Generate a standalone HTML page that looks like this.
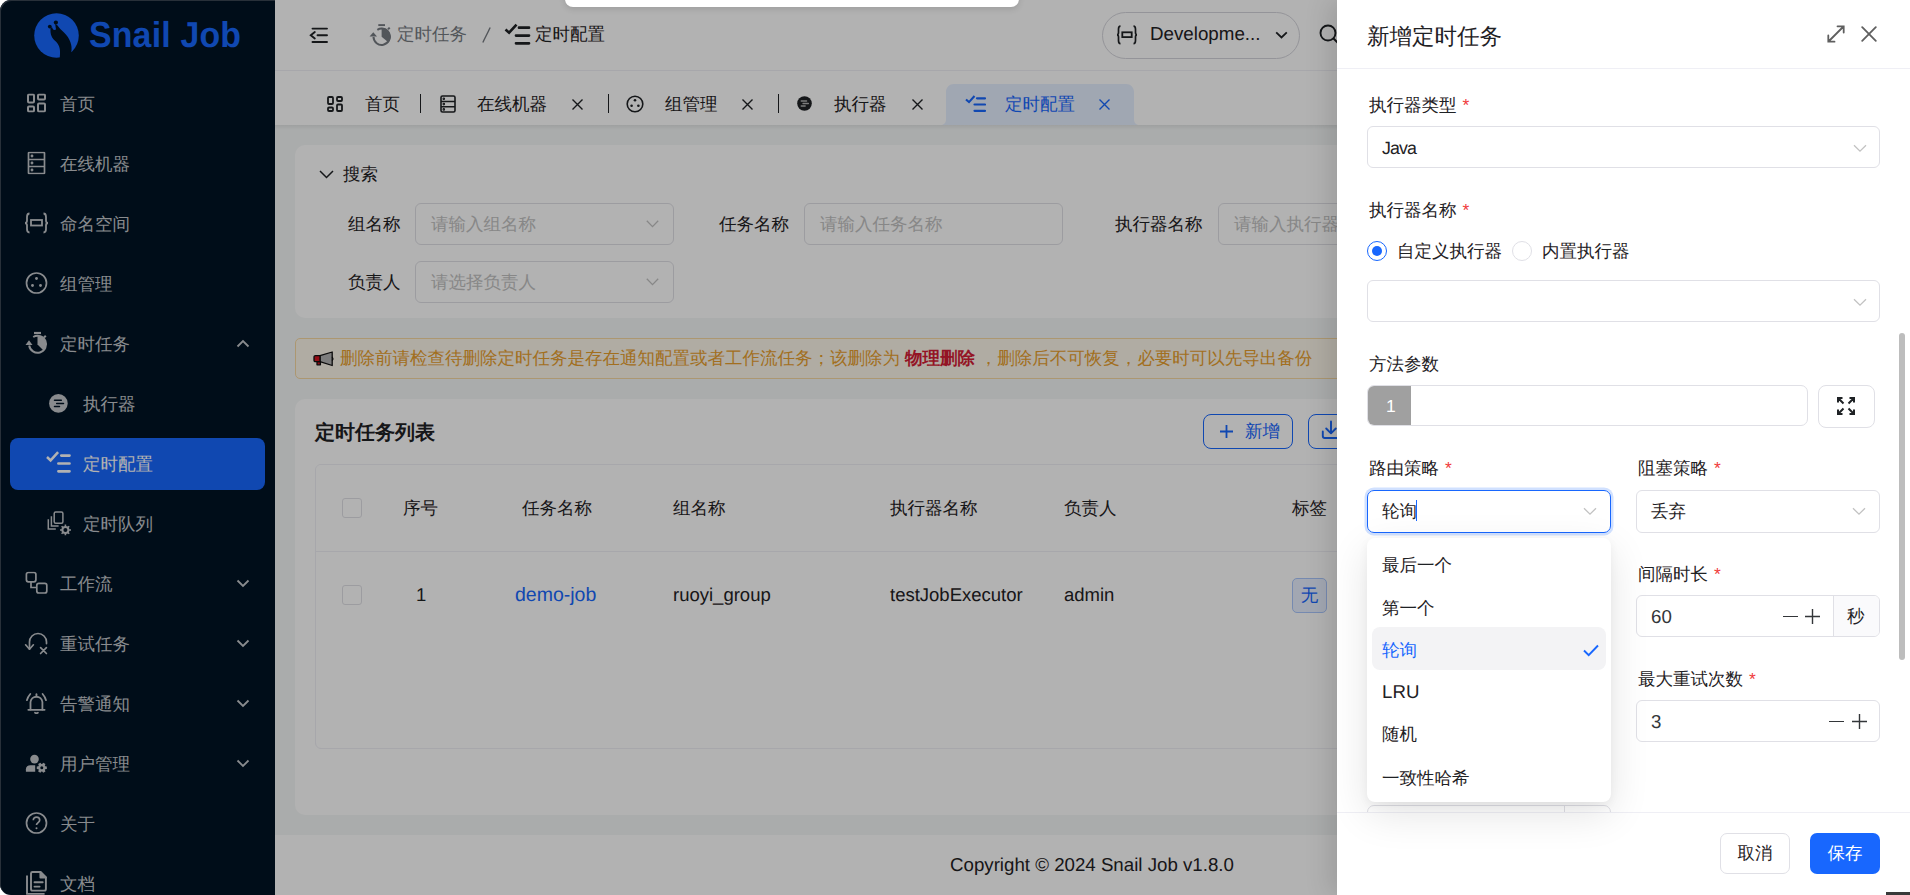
<!DOCTYPE html>
<html><head><meta charset="utf-8">
<style>
*{box-sizing:border-box;margin:0;padding:0}
html,body{width:1910px;height:895px;overflow:hidden;background:#fff}
body{position:relative;font-family:"Liberation Sans",sans-serif;font-size:17.5px;color:#1f2225;text-rendering:geometricPrecision}
.abs{position:absolute}
svg{display:block}
/* sidebar */
#side{position:absolute;left:0;top:0;width:275px;height:895px;background:#011324;border-radius:11px 0 0 11px;box-shadow:inset 1px 1px 0 #3a4652}
.mi{position:absolute;left:0;width:275px;height:52px;color:#c4c8cc;font-size:17.5px;line-height:52px}
.mi .ic{position:absolute;top:50%;transform:translateY(-50%)}
.mi .tx{position:absolute;left:60px;top:1px}
.mi .chev{position:absolute;left:236px;top:50%;margin-top:-4px}
/* header */
#hdr{position:absolute;left:275px;top:0;width:1635px;height:71px;background:#fff;border-bottom:1px solid #efeff5}
#tabs{position:absolute;left:275px;top:70px;width:1635px;height:55px;background:#fff}
#content{position:absolute;left:275px;top:125px;width:1635px;height:710px;background:#f4f7f7}
#foot{position:absolute;left:275px;top:835px;width:1635px;height:60px;background:#fff}
.card{position:absolute;background:#fff;border-radius:10px}
.inp{position:absolute;border:1px solid #e0e0e6;border-radius:6px;height:42px;background:#fff}
.ph{position:absolute;left:15px;top:0;line-height:40px;color:#c2c2c2}
.lbl{position:absolute;line-height:20px}
#overlay{position:absolute;left:0;top:0;width:1910px;height:895px;background:rgba(0,0,0,.3);border-radius:11px 0 0 11px}
/* drawer */
#drawer{position:absolute;left:1337px;top:0;width:573px;height:895px;background:#fff;box-shadow:-8px 0 24px rgba(0,0,0,.12)}
.dl{position:absolute;line-height:20px;color:#1f2225}
.req{color:#f03d3d;margin-left:6px}
.sel{position:absolute;height:42px;border:1px solid #e0e0e6;border-radius:6px;background:#fff}
</style></head><body>

<div id="side">
 <svg class="abs" style="left:30px;top:10px" width="54" height="52" viewBox="0 0 54 52">
  <circle cx="26.5" cy="25.5" r="22.3" fill="#1867fe"/>
  <path d="M20.6,17.5 C20.2,22 20.5,27 25,30.8 C29,34 30.4,38.5 30,44 L29.5,52 L46,52 L41.3,42.6 C42.6,35 40,28.5 34,22.5 C31.5,20 29.5,18.5 27.6,15.5 L25.2,14.2 L26,19.6 C24.6,20.5 22.8,20.2 22.2,17.6 Z" fill="#011324"/>
  <circle cx="19.8" cy="16.6" r="1.9" fill="#011324"/>
  <circle cx="25.9" cy="12.6" r="2.1" fill="#011324"/>
 </svg>
 <div class="abs" style="left:89px;top:13px;font-size:36px;font-weight:bold;color:#1867fe;line-height:44px;transform-origin:0 0;transform:scaleX(0.94);letter-spacing:0.2px">Snail Job</div>

 <div class="mi" style="top:77px">
  <svg class="ic" style="left:27px" width="19" height="19" viewBox="0 0 19 19" fill="none" stroke="#c4c8cc" stroke-width="2"><rect x="1" y="1" width="6" height="8" rx="1"/><rect x="11" y="1" width="7" height="5" rx="1"/><rect x="1" y="13" width="6" height="5" rx="1"/><rect x="11" y="10" width="7" height="8" rx="1"/></svg>
  <span class="tx">首页</span></div>
 <div class="mi" style="top:137px">
  <svg class="ic" style="left:27px" width="19" height="23" viewBox="0 0 19 23" fill="none" stroke="#c4c8cc" stroke-width="1.7"><rect x="1.5" y="1" width="16" height="21" rx="0.5"/><path d="M1.5 8h16M1.5 15h16"/><circle cx="5" cy="4.5" r="0.6" fill="#c4c8cc"/><circle cx="5" cy="11.5" r="0.6" fill="#c4c8cc"/><circle cx="5" cy="18.5" r="0.6" fill="#c4c8cc"/></svg>
  <span class="tx">在线机器</span></div>
 <div class="mi" style="top:197px">
  <svg class="ic" style="left:24px" width="25" height="22" viewBox="0 0 25 22" fill="none" stroke="#c4c8cc" stroke-width="1.8"><path d="M5.5 1.5C3 1.5 3 3 3 5v3.5C3 10 2 11 1 11c1 0 2 1 2 2.5V17c0 2 0 3.5 2.5 3.5"/><path d="M19.5 1.5C22 1.5 22 3 22 5v3.5c0 1.5 1 2.5 2 2.5c-1 0-2 1-2 2.5V17c0 2 0 3.5-2.5 3.5"/><rect x="7" y="8" width="11" height="5.5"/></svg>
  <span class="tx">命名空间</span></div>
 <div class="mi" style="top:257px">
  <svg class="ic" style="left:25px" width="23" height="23" viewBox="0 0 23 23" fill="none" stroke="#c4c8cc" stroke-width="1.7"><circle cx="11.5" cy="11.5" r="10"/><circle cx="11.5" cy="7" r="1.4" fill="#c4c8cc" stroke="none"/><circle cx="7.5" cy="14" r="1.4" fill="#c4c8cc" stroke="none"/><circle cx="15.5" cy="14" r="1.4" fill="#c4c8cc" stroke="none"/></svg>
  <span class="tx">组管理</span></div>
 <div class="mi" style="top:317px">
  <svg class="ic" style="left:22px" width="30" height="30" viewBox="0 0 30 30" fill="none" stroke="#c4c8cc" stroke-width="2"><path d="M12 5h7" stroke-width="2.2"/><path d="M7.2 17.5A8.5 8.5 0 1 0 11.2 9"/><path d="M15.5 16.5V8A8.5 8.5 0 0 1 21.5 22.5Z" fill="#c4c8cc" stroke="none"/><path d="M3.5 17L7 12.3L10.5 17Z" fill="#c4c8cc" stroke="none"/><path d="M22 9.5l1.8-1.8"/></svg>
  <span class="tx">定时任务</span>
  <svg class="chev" width="14" height="9" viewBox="0 0 14 9" fill="none" stroke="#c4c8cc" stroke-width="1.8"><path d="M1.5 7.5L7 2l5.5 5.5"/></svg></div>
 <div class="mi" style="top:377px">
  <svg class="abs" style="left:49px;top:17px" width="19" height="19" viewBox="0 0 19 19"><circle cx="9.4" cy="9.4" r="9.3" fill="#c4c8cc"/><path d="M5.5 6.3h6.8M7.7 9.4h6.8M5.5 12.6h5" stroke="#011324" stroke-width="1.5" stroke-linecap="round"/></svg>
  <span class="tx" style="left:83px">执行器</span></div>
 <div class="abs" style="left:10px;top:438px;width:255px;height:52px;background:#1867fe;border-radius:8px"></div>
 <div class="mi" style="top:437px;color:#fff">
  <svg class="ic" style="left:46px" width="26" height="26" viewBox="0 0 26 26" fill="none" stroke="#fff" stroke-width="2.7"><path d="M1 7l3.6 3.4L12.1 2.2" stroke-width="2.5"/><path d="M15.3 5.6h8.2M12.4 13.5h11.1M12.4 21.3h11.1" stroke-linecap="round"/></svg>
  <span class="tx" style="left:83px">定时配置</span></div>
 <div class="mi" style="top:497px">
  <svg class="ic" style="left:46px" width="26" height="25" viewBox="0 0 26 25" fill="none" stroke="#c4c8cc" stroke-width="1.5"><rect x="8.2" y="1.6" width="8.7" height="11.1" rx="1.5"/><path d="M5.4 5.8v9.6h7.2M2.3 8.8v9.8h7.5"/><circle cx="19.4" cy="19.5" r="3" stroke-width="2"/><path d="M19.4 14v2M19.4 23v2M14 19.5h2M23 19.5h2M15.6 15.7l1.4 1.4M21.8 21.9l1.4 1.4M15.6 23.3l1.4-1.4M21.8 17.1l1.4-1.4" stroke-width="1.6"/></svg>
  <span class="tx" style="left:83px">定时队列</span></div>
 <div class="mi" style="top:557px">
  <svg class="ic" style="left:25px" width="23" height="23" viewBox="0 0 23 23" fill="none" stroke="#c4c8cc" stroke-width="1.7"><rect x="1.4" y="1" width="9.5" height="9.3" rx="2"/><rect x="11.8" y="11.9" width="10" height="9.6" rx="2"/><path d="M6 10.3v5.7h5.8"/></svg>
  <span class="tx">工作流</span>
  <svg class="chev" width="14" height="9" viewBox="0 0 14 9" fill="none" stroke="#c4c8cc" stroke-width="1.8"><path d="M1.5 1.5L7 7l5.5-5.5"/></svg></div>
 <div class="mi" style="top:617px">
  <svg class="abs" style="left:20px;top:11px" width="32" height="32" viewBox="0 0 32 32" fill="none" stroke="#c4c8cc" stroke-width="1.7" stroke-linecap="round" stroke-linejoin="round"><path d="M9.5 21V14A8.5 8.5 0 0 1 26.5 14V15.6"/><path d="M5.6 16.8L9.5 21.2L13.4 16.8"/><path d="M20.6 19.7L26.4 25.5M26.4 19.7L20.6 25.5"/></svg>
  <span class="tx">重试任务</span>
  <svg class="chev" width="14" height="9" viewBox="0 0 14 9" fill="none" stroke="#c4c8cc" stroke-width="1.8"><path d="M1.5 1.5L7 7l5.5-5.5"/></svg></div>
 <div class="mi" style="top:677px">
  <svg class="abs" style="left:20px;top:11px" width="32" height="32" viewBox="0 0 32 32" fill="none" stroke="#c4c8cc" stroke-width="1.8" stroke-linecap="round"><path d="M10.5 21.6V14A6 6 0 0 1 22.4 14V21.6"/><path d="M8.3 21.8H24.6"/><path d="M16.45 8V6.2"/><path d="M15 24.8Q16.45 25.6 17.9 24.8"/><path d="M10.3 6Q8 8.6 6.9 12.2M22.6 6Q24.9 8.6 26 12.2"/></svg>
  <span class="tx">告警通知</span>
  <svg class="chev" width="14" height="9" viewBox="0 0 14 9" fill="none" stroke="#c4c8cc" stroke-width="1.8"><path d="M1.5 1.5L7 7l5.5-5.5"/></svg></div>
 <div class="mi" style="top:737px">
  <svg class="abs" style="left:20px;top:11px" width="32" height="32" viewBox="0 0 32 32"><circle cx="14.5" cy="11.1" r="4.3" fill="#c4c8cc"/><path d="M5.9 23.8V21.2C5.9 18.7 7.8 17.2 10.4 17.2H15.2V23.8Z" fill="#c4c8cc"/><path fill-rule="evenodd" fill="#c4c8cc" d="M25.18,18.19 L26.84,18.40 L26.84,21.00 L25.18,21.21 L24.80,21.87 L25.44,23.41 L23.20,24.71 L22.18,23.38 L21.42,23.38 L20.40,24.71 L18.16,23.41 L18.80,21.87 L18.42,21.21 L16.76,21.00 L16.76,18.40 L18.42,18.19 L18.80,17.53 L18.16,15.99 L20.40,14.69 L21.42,16.02 L22.18,16.02 L23.20,14.69 L25.44,15.99 L24.80,17.53Z M23.3,19.7 A1.5,1.5 0 1 0 20.3,19.7 A1.5,1.5 0 1 0 23.3,19.7Z"/></svg>
  <span class="tx">用户管理</span>
  <svg class="chev" width="14" height="9" viewBox="0 0 14 9" fill="none" stroke="#c4c8cc" stroke-width="1.8"><path d="M1.5 1.5L7 7l5.5-5.5"/></svg></div>
 <div class="mi" style="top:797px">
  <svg class="ic" style="left:25px" width="23" height="23" viewBox="0 0 23 23" fill="none" stroke="#c4c8cc" stroke-width="1.7"><circle cx="11.5" cy="11.5" r="10"/><path d="M8.3 8.8C8.3 6.8 9.8 5.6 11.5 5.6s3.2 1.2 3.2 3c0 2.5-3.2 2.5-3.2 5"/><circle cx="11.5" cy="16.8" r="1" fill="#c4c8cc" stroke="none"/></svg>
  <span class="tx">关于</span></div>
 <div class="mi" style="top:857px">
  <svg class="abs" style="left:20px;top:9px" width="32" height="32" viewBox="0 0 32 32" fill="none" stroke="#c4c8cc" stroke-width="1.9" stroke-linejoin="round"><path d="M12.5 6H20.4L25.9 11.5V23Q25.9 24.6 24.3 24.6H12.5Q11 24.6 11 23V7.5Q11 6 12.5 6Z"/><path d="M20.4 6V11.5H25.9Z" fill="#c4c8cc"/><path d="M14.5 16.2H22.7M14.5 20.6H19.6" stroke-linecap="round"/><path d="M7 9.4V27.9H24.6"/></svg>
  <span class="tx">文档</span></div>
</div>
<div id="tabs">
 <svg class="abs" style="left:52px;top:26px" width="16" height="16" viewBox="0 0 16 16" fill="none" stroke="#1f2225" stroke-width="1.8"><rect x="1" y="1" width="5" height="7" rx="1"/><rect x="10" y="1" width="5" height="4" rx="1"/><rect x="1" y="11.5" width="5" height="3.5" rx="1"/><rect x="10" y="8.5" width="5" height="6.5" rx="1"/></svg>
 <div class="abs" style="left:90px;top:24px;line-height:20px">首页</div>
 <div class="abs" style="left:145px;top:24px;width:1px;height:19px;background:#1f2225"></div>
 <svg class="abs" style="left:165px;top:25px" width="16" height="18" viewBox="0 0 16 18" fill="none" stroke="#1f2225" stroke-width="1.6"><rect x="1" y="1" width="14" height="16" rx="1.5"/><path d="M1 6.5h14M1 11.8h14"/><circle cx="3.8" cy="3.8" r=".5" fill="#1f2225"/><circle cx="3.8" cy="9.1" r=".5" fill="#1f2225"/><circle cx="3.8" cy="14.4" r=".5" fill="#1f2225"/></svg>
 <div class="abs" style="left:202px;top:24px;line-height:20px">在线机器</div>
 <svg class="abs" style="left:297px;top:29px" width="11" height="11" viewBox="0 0 11 11" fill="none" stroke="#1f2225" stroke-width="1.4"><path d="M.5.5l10 10M10.5.5l-10 10"/></svg>
 <div class="abs" style="left:333px;top:24px;width:1px;height:19px;background:#1f2225"></div>
 <svg class="abs" style="left:351px;top:25px" width="18" height="18" viewBox="0 0 18 18" fill="none" stroke="#1f2225" stroke-width="1.6"><circle cx="9" cy="9" r="7.8"/><circle cx="9" cy="5.3" r="1.3" fill="#1f2225" stroke="none"/><circle cx="5.6" cy="10.8" r="1.3" fill="#1f2225" stroke="none"/><circle cx="12.4" cy="10.8" r="1.3" fill="#1f2225" stroke="none"/></svg>
 <div class="abs" style="left:390px;top:24px;line-height:20px">组管理</div>
 <svg class="abs" style="left:467px;top:29px" width="11" height="11" viewBox="0 0 11 11" fill="none" stroke="#1f2225" stroke-width="1.4"><path d="M.5.5l10 10M10.5.5l-10 10"/></svg>
 <div class="abs" style="left:503px;top:24px;width:1px;height:19px;background:#1f2225"></div>
 <svg class="abs" style="left:522px;top:26px" width="15" height="15" viewBox="0 0 15 15"><circle cx="7.5" cy="7.5" r="7.3" fill="#1f2225"/><path d="M4.2 5h5.4M6 7.5h5.4M4.2 10h4" stroke="#b3b3b3" stroke-width="1.3" stroke-linecap="round"/></svg>
 <div class="abs" style="left:559px;top:24px;line-height:20px">执行器</div>
 <svg class="abs" style="left:637px;top:29px" width="11" height="11" viewBox="0 0 11 11" fill="none" stroke="#1f2225" stroke-width="1.4"><path d="M.5.5l10 10M10.5.5l-10 10"/></svg>
 <svg class="abs" style="left:665px;top:14px" width="200" height="41" viewBox="0 0 200 41"><path d="M0 41C4 41 6 39 6 35V8C6 3.5 9.5 0 14 0H186C190.5 0 194 3.5 194 8V35C194 39 196 41 200 41Z" fill="#e6efff"/></svg>
 <svg class="abs" style="left:690px;top:24px" width="21" height="19" viewBox="0 0 21 19" fill="none" stroke="#1867fe" stroke-width="2.2"><path d="M1 5.5l3 2.6L9.5 2" stroke-width="2.1"/><path d="M12 4.3h8M9.5 10.5h10.5M9.5 16.8h10.5" stroke-linecap="round"/></svg>
 <div class="abs" style="left:730px;top:24px;line-height:20px;color:#1867fe">定时配置</div>
 <svg class="abs" style="left:824px;top:29px" width="11" height="11" viewBox="0 0 11 11" fill="none" stroke="#1867fe" stroke-width="1.4"><path d="M.5.5l10 10M10.5.5l-10 10"/></svg>
</div>
<div id="hdr">
 <svg class="abs" style="left:34px;top:26px" width="20" height="18" viewBox="0 0 20 18" fill="none" stroke="#1f2225" stroke-width="1.9" stroke-linecap="round"><path d="M3.5 2.6h14.5M8.5 9.2h9.5M3.5 16h14.5M5.8 6l-4 3.2 4 3.2"/></svg>
 <svg class="abs" style="left:94px;top:23px" width="24" height="24" viewBox="0 0 24 24" fill="none" stroke="#767b82" stroke-width="2"><path d="M9.3 2.1h6.7" stroke-width="1.9"/><path d="M4.50 14.05A8.15 8.15 0 1 0 8.33 6.84"/><path d="M12.65 13.75V4.70A9.05 9.05 0 0 1 19.58 19.57Z" fill="#767b82" stroke="none"/><path d="M0.6 13.6L4.3 9.3L8 13.6Z" fill="#767b82" stroke="none"/><path d="M19 6.3l1.7-1.7"/></svg>
 <div class="abs" style="left:122px;top:24px;line-height:20px;color:#767b82">定时任务</div>
 <svg class="abs" style="left:207px;top:27px" width="9" height="16" viewBox="0 0 9 16"><path d="M0.8 15.5L8.2 0.5" stroke="#767b82" stroke-width="1.4"/></svg>
 <svg class="abs" style="left:229px;top:22px" width="27" height="24" viewBox="0 0 27 24" fill="none" stroke="#1f2225" stroke-width="2.7"><path d="M1.5 7.5l3.6 3.2L12.5 2.6" stroke-width="2.6"/><path d="M15 5.7h10M12 13.6h13M12 21.3h13" stroke-linecap="round"/></svg>
 <div class="abs" style="left:260px;top:24px;line-height:20px;color:#1f2225">定时配置</div>
 <div class="abs" style="left:827px;top:12px;width:198px;height:47px;border:1px solid #d5d5dc;border-radius:24px"></div>
 <svg class="abs" style="left:841px;top:25px" width="22" height="20" viewBox="0 0 22 20" fill="none" stroke="#1f2225" stroke-width="1.7"><path d="M4.5 1.2C2.5 1.2 2.5 2.5 2.5 4.3v3.3C2.5 9 1.8 9.8 1 9.8c.8 0 1.5.8 1.5 2.2v3.5c0 1.8 0 3.2 2 3.2"/><path d="M17.5 1.2c2 0 2 1.3 2 3.1v3.3c0 1.4.7 2.2 1.5 2.2-.8 0-1.5.8-1.5 2.2v3.5c0 1.8 0 3.2-2 3.2"/><rect x="6.3" y="7.3" width="9.4" height="4.8" stroke-width="1.8"/></svg>
 <div class="abs" style="left:875px;top:23px;line-height:22px;font-size:18.75px;color:#1f2225">Developme...</div>
 <svg class="abs" style="left:1000px;top:31px" width="13" height="8" viewBox="0 0 13 8" fill="none" stroke="#1f2225" stroke-width="1.8"><path d="M1.2 1.3L6.5 6.5l5.3-5.2"/></svg>
 <svg class="abs" style="left:1044px;top:24px" width="22" height="22" viewBox="0 0 22 22" fill="none" stroke="#1f2225" stroke-width="1.9"><circle cx="9" cy="9" r="7.5"/><path d="M14.5 14.5l5.5 5.5"/></svg>
</div>
<div id="content">
 <div class="abs" style="left:0;top:0;width:1635px;height:5px;background:linear-gradient(rgba(0,0,0,.07),rgba(0,0,0,0))"></div>
 <div class="card" style="left:20px;top:20px;width:1300px;height:173px">
  <svg class="abs" style="left:24px;top:25px" width="15" height="9" viewBox="0 0 15 9" fill="none" stroke="#1f2225" stroke-width="1.5"><path d="M1 1l6.5 6.5L14 1"/></svg>
  <div class="abs" style="left:48px;top:19px;line-height:20px">搜索</div>
  <div class="abs" style="left:53px;top:69px;line-height:20px">组名称</div>
  <div class="inp" style="left:120px;top:58px;width:259px"><div class="ph">请输入组名称</div>
   <svg class="abs" style="left:230px;top:16px" width="13" height="8" viewBox="0 0 13 8" fill="none" stroke="#c2c2c2" stroke-width="1.3"><path d="M.8.8l5.7 5.8L12.2.8"/></svg></div>
  <div class="abs" style="left:424px;top:69px;line-height:20px">任务名称</div>
  <div class="inp" style="left:509px;top:58px;width:259px"><div class="ph">请输入任务名称</div></div>
  <div class="abs" style="left:820px;top:69px;line-height:20px">执行器名称</div>
  <div class="inp" style="left:923px;top:58px;width:259px"><div class="ph">请输入执行器名称</div></div>
  <div class="abs" style="left:53px;top:127px;line-height:20px">负责人</div>
  <div class="inp" style="left:120px;top:116px;width:259px"><div class="ph">请选择负责人</div>
   <svg class="abs" style="left:230px;top:16px" width="13" height="8" viewBox="0 0 13 8" fill="none" stroke="#c2c2c2" stroke-width="1.3"><path d="M.8.8l5.7 5.8L12.2.8"/></svg></div>
 </div>
 <div class="abs" style="left:20px;top:213px;width:1300px;height:41px;background:#fdf6ea;border:1px solid #f6d9a2;border-radius:5px">
  <svg class="abs" style="left:17px;top:12px" width="22" height="16" viewBox="0 0 22 16" stroke="#111" stroke-width="1.3" stroke-linejoin="round"><path d="M7 4.7L19.2 1V14.5L7 10.7Z" fill="#b4b4b4"/><path d="M19.2 5.8Q20.6 7.7 19.2 9.6" fill="none"/><path d="M4 10.5H7.4V13.8H4Z" fill="#d3131f"/><path d="M2.5 4.7H7V10.7H2.5Q1 10.7 1 9.2V6.2Q1 4.7 2.5 4.7Z" fill="#d3131f"/></svg>
  <div class="abs" style="left:44px;top:9px;line-height:20px;color:#e8a02e;white-space:nowrap">删除前请检查待删除定时任务是存在通知配置或者工作流任务；该删除为 <b style="color:#d41e36">物理删除</b> ，删除后不可恢复，必要时可以先导出备份</div>
 </div>
 <div class="card" style="left:20px;top:274px;width:1300px;height:416px">
  <div class="abs" style="left:20px;top:22px;line-height:24px;font-size:20px;font-weight:bold;color:#1f2225">定时任务列表</div>
  <div class="abs" style="left:908px;top:15px;width:90px;height:35px;border:1.3px solid #1867fe;border-radius:8px"></div>
  <svg class="abs" style="left:925px;top:26px" width="13" height="13" viewBox="0 0 13 13" stroke="#1867fe" stroke-width="1.8"><path d="M6.5 0v13M0 6.5h13"/></svg>
  <div class="abs" style="left:950px;top:22px;line-height:20px;color:#1867fe">新增</div>
  <div class="abs" style="left:1013px;top:15px;width:90px;height:35px;border:1.3px solid #1867fe;border-radius:8px"></div>
  <svg class="abs" style="left:1026px;top:21px" width="20" height="20" viewBox="0 0 20 20" fill="none" stroke="#1867fe" stroke-width="1.9" stroke-linecap="round" stroke-linejoin="round"><path d="M10 1.5v11.5M5.2 8.5l4.8 4.8 4.8-4.8M1.8 11.5v4.5q0 2 2 2h12.4q2 0 2-2v-4.5"/></svg>
  <div class="abs" style="left:20px;top:65px;width:1300px;height:285px;border:1px solid #efeff5;border-radius:6px;overflow:hidden">
   <div class="abs" style="left:0;top:0;width:1300px;height:87px;background:#fff;border-bottom:1px solid #efeff5"></div>
   <div class="abs" style="left:26px;top:33px;width:20px;height:20px;border:1px solid #e0e0e6;border-radius:3px;background:#fff"></div>
   <div class="abs" style="left:87px;top:33px;line-height:20px">序号</div>
   <div class="abs" style="left:206px;top:33px;line-height:20px">任务名称</div>
   <div class="abs" style="left:357px;top:33px;line-height:20px">组名称</div>
   <div class="abs" style="left:574px;top:33px;line-height:20px">执行器名称</div>
   <div class="abs" style="left:748px;top:33px;line-height:20px">负责人</div>
   <div class="abs" style="left:976px;top:33px;line-height:20px">标签</div>
   <div class="abs" style="left:26px;top:120px;width:20px;height:20px;border:1px solid #e0e0e6;border-radius:3px;background:#fff"></div>
   <div class="abs" style="left:100px;top:119px;line-height:22px;font-size:18.5px">1</div>
   <div class="abs" style="left:199px;top:119px;line-height:22px;font-size:19.5px;color:#1867fe">demo-job</div>
   <div class="abs" style="left:357px;top:119px;line-height:22px;font-size:18.5px">ruoyi_group</div>
   <div class="abs" style="left:574px;top:119px;line-height:22px;font-size:18.5px">testJobExecutor</div>
   <div class="abs" style="left:748px;top:119px;line-height:22px;font-size:18.5px">admin</div>
   <div class="abs" style="left:976px;top:113px;width:35px;height:35px;border:1px solid #a9c6fd;background:#e8f0ff;border-radius:5px;color:#1867fe;line-height:33px;text-align:center">无</div>
  </div>
 </div>
</div>
<div id="foot">
 <div class="abs" style="left:675px;top:19px;line-height:22px;font-size:18.7px;color:#1f2225">Copyright © 2024 Snail Job v1.8.0</div>
</div>

<div id="overlay"></div>
<div id="drawer">
 <div class="abs" style="left:30px;top:24px;line-height:26px;font-size:22.5px;color:#1f2225">新增定时任务</div>
 <svg class="abs" style="left:490px;top:25px" width="18" height="18" viewBox="0 0 18 18" fill="none" stroke="#5f5f5f" stroke-width="1.8" stroke-linecap="round"><path d="M1.5 16.5L16.5 1.5M10.5 1.3h6.2v6.2M1.3 10.5v6.2h6.2"/></svg>
 <svg class="abs" style="left:524px;top:26px" width="16" height="16" viewBox="0 0 16 16" fill="none" stroke="#5f5f5f" stroke-width="1.8" stroke-linecap="round"><path d="M1.2 1.2l13.6 13.6M14.8 1.2L1.2 14.8"/></svg>
 <div class="abs" style="left:0;top:68px;width:573px;height:1px;background:#efeff5"></div>

 <div class="dl" style="left:32px;top:95px">执行器类型<span class="req">*</span></div>
 <div class="sel" style="left:30px;top:126px;width:513px"><div class="abs" style="left:14px;top:10px;line-height:22px;font-size:17.8px;letter-spacing:-0.9px">Java</div></div>
 <svg class="abs" style="left:516px;top:144px" width="14" height="9" viewBox="0 0 14 9" fill="none" stroke="#c2c2c2" stroke-width="1.3"><path d="M1 1.2l6 6 6-6"/></svg>
 <div class="dl" style="left:32px;top:200px">执行器名称<span class="req">*</span></div>
 <div class="abs" style="left:30px;top:241px;width:20px;height:20px;border:1.3px solid #1867fe;border-radius:50%"><div class="abs" style="left:3.7px;top:3.7px;width:10px;height:10px;border-radius:50%;background:#1867fe"></div></div>
 <div class="dl" style="left:60px;top:241px">自定义执行器</div>
 <div class="abs" style="left:175px;top:241px;width:20px;height:20px;border:1.3px solid #e0e0e6;border-radius:50%"></div>
 <div class="dl" style="left:205px;top:241px">内置执行器</div>
 <div class="sel" style="left:30px;top:280px;width:513px"></div>
 <svg class="abs" style="left:516px;top:298px" width="14" height="9" viewBox="0 0 14 9" fill="none" stroke="#c2c2c2" stroke-width="1.3"><path d="M1 1.2l6 6 6-6"/></svg>
 <div class="dl" style="left:32px;top:354px">方法参数</div>
 <div class="abs" style="left:30px;top:385px;width:441px;height:41px;border:1.3px solid #e0e0e6;border-radius:7px;overflow:hidden">
  <div class="abs" style="left:0;top:0;width:43px;height:41px;background:#a0a0a0"></div>
  <div class="abs" style="left:18px;top:9px;line-height:22px;font-size:17.5px;color:#fff">1</div>
 </div>
 <div class="abs" style="left:481px;top:385px;width:57px;height:43px;border:1.3px solid #e0e0e6;border-radius:8px"></div>
 <svg class="abs" style="left:500px;top:397px" width="18" height="18" viewBox="0 0 18 18" fill="none" stroke="#1f2225" stroke-width="2"><path d="M1.5 1.5l5 5M1 5.5V1h4.5M16.5 1.5l-5 5M12.5 1H17v4.5M1.5 16.5l5-5M1 12.5V17h4.5M16.5 16.5l-5-5M17 12.5V17h-4.5"/></svg>

 <div class="dl" style="left:32px;top:458px">路由策略<span class="req">*</span></div>
 <div class="dl" style="left:301px;top:458px">阻塞策略<span class="req">*</span></div>
 <div class="abs" style="left:30px;top:490px;width:244px;height:43px;border:1.5px solid #1867fe;border-radius:7px;box-shadow:0 0 0 2.5px rgba(24,103,254,.2)">
  <div class="abs" style="left:14px;top:9px;line-height:22px">轮询</div>
  <div class="abs" style="left:48px;top:9px;width:1.2px;height:21px;background:#1867fe"></div>
 </div>
 <svg class="abs" style="left:246px;top:507px" width="14" height="9" viewBox="0 0 14 9" fill="none" stroke="#c2c2c2" stroke-width="1.3"><path d="M1 1.2l6 6 6-6"/></svg>
 <div class="sel" style="left:299px;top:490px;width:244px;height:43px"><div class="abs" style="left:14px;top:9px;line-height:22px">丢弃</div></div>
 <svg class="abs" style="left:515px;top:507px" width="14" height="9" viewBox="0 0 14 9" fill="none" stroke="#c2c2c2" stroke-width="1.3"><path d="M1 1.2l6 6 6-6"/></svg>

 <div class="dl" style="left:301px;top:564px">间隔时长<span class="req">*</span></div>
 <div class="sel" style="left:299px;top:595px;width:244px;overflow:hidden">
  <div class="abs" style="left:196px;top:0;width:48px;height:42px;background:#fafafc;border-left:1px solid #e0e0e6"></div>
  <div class="abs" style="left:210px;top:10px;line-height:20px">秒</div>
  <div class="abs" style="left:14px;top:10px;line-height:22px;font-size:18.7px;color:#333639">60</div>
 </div>
 <div class="abs" style="left:446px;top:616px;width:15px;height:1.3px;background:#333639"></div><svg class="abs" style="left:468px;top:609px" width="15" height="15" viewBox="0 0 15 15" stroke="#333639" stroke-width="1.4"><path d="M7.5 0v15M0 7.5h15"/></svg>
 <div class="dl" style="left:301px;top:669px">最大重试次数<span class="req">*</span></div>
 <div class="sel" style="left:299px;top:700px;width:244px">
  <div class="abs" style="left:14px;top:10px;line-height:22px;font-size:18.7px;color:#333639">3</div>
 </div>
 <div class="abs" style="left:492px;top:721px;width:15px;height:1.3px;background:#333639"></div><svg class="abs" style="left:515px;top:714px" width="15" height="15" viewBox="0 0 15 15" stroke="#333639" stroke-width="1.4"><path d="M7.5 0v15M0 7.5h15"/></svg>

 <div class="abs" style="left:30px;top:805px;width:244px;height:20px;border:1px solid #e0e0e6;border-radius:7px 7px 0 0"><div class="abs" style="left:196px;top:0;width:1px;height:20px;background:#e0e0e6"></div></div>

  <div class="abs" style="left:0;top:812px;width:573px;height:83px;background:#fff;border-top:1px solid #efeff5"></div>
 <div class="abs" style="left:383px;top:833px;width:70px;height:41px;border:1.3px solid #e0e0e6;border-radius:7px;line-height:39px;text-align:center">取消</div>
 <div class="abs" style="left:473px;top:833px;width:70px;height:41px;background:#1867fe;border-radius:7px;line-height:41px;text-align:center;color:#fff">保存</div>
 <div class="abs" style="left:30px;top:538px;width:244px;height:264px;background:#fff;border-radius:8px;box-shadow:0 12px 40px rgba(0,0,0,.11),0 3px 10px rgba(0,0,0,.05)">
  <div class="abs" style="left:15px;top:17px;line-height:20px">最后一个</div>
  <div class="abs" style="left:15px;top:59.5px;line-height:20px">第一个</div>
  <div class="abs" style="left:5px;top:89px;width:234px;height:43px;background:#f3f3f5;border-radius:8px"></div>
  <div class="abs" style="left:15px;top:101.5px;line-height:20px;color:#1867fe">轮询</div>
  <svg class="abs" style="left:216px;top:106px" width="16" height="13" viewBox="0 0 16 13" fill="none" stroke="#1867fe" stroke-width="1.9"><path d="M1 6.5l4.7 4.7L15 1.5"/></svg>
  <div class="abs" style="left:15px;top:143px;line-height:22px;font-size:18.7px">LRU</div>
  <div class="abs" style="left:15px;top:186px;line-height:20px">随机</div>
  <div class="abs" style="left:15px;top:229.5px;line-height:20px">一致性哈希</div>
 </div>
 <div class="abs" style="left:562px;top:333px;width:6px;height:327px;background:#bdbdbd;border-radius:3px"></div>
</div>


<div class="abs" style="left:565px;top:-20px;width:454px;height:27px;background:#fff;border-radius:8px;box-shadow:0 2px 6px rgba(0,0,0,.12)"></div>
<div class="abs" style="left:1886px;top:892px;width:24px;height:3px;background:#3a3a3a"></div>
</body></html>
